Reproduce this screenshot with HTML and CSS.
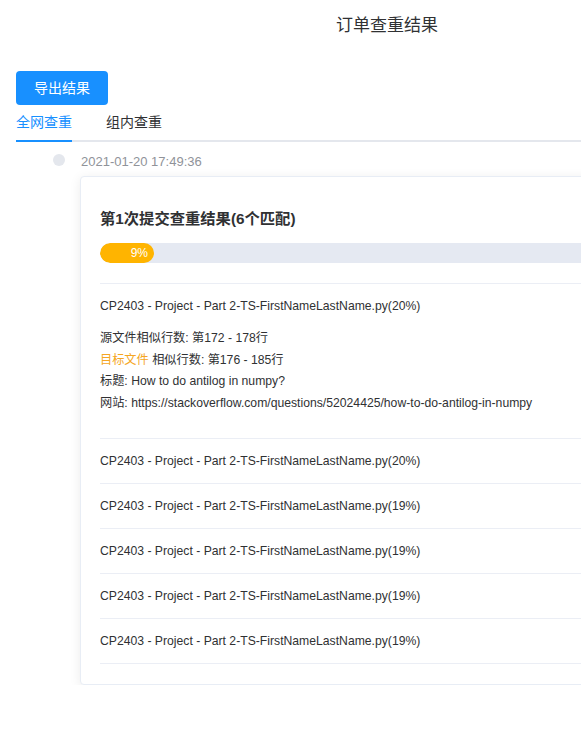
FILE: index.html
```html
<!DOCTYPE html>
<html lang="zh-CN">
<head>
<meta charset="utf-8">
<title>订单查重结果</title>
<link rel="stylesheet" href="styles.css">
</head>
<body>
<div class="page">
  <h1 class="title">订单查重结果</h1>
  <div class="toolbar">
    <button class="btn-primary">导出结果</button>
  </div>
  <div class="tabs">
    <div class="tab active">全网查重</div>
    <div class="tab">组内查重</div>
  </div>
  <ul class="timeline">
    <li class="tl-item">
      <span class="tl-dot"></span>
      <div class="tl-body">
        <div class="tl-time">2021-01-20 17:49:36</div>
        <div class="card">
          <h3 class="card-title">第1次提交查重结果(6个匹配)</h3>
          <div class="progress"><div class="progress-fill" style="width:54px"><span>9%</span></div></div>
          <ul class="matches">
            <li class="match">
              <div class="match-head">CP2403 - Project - Part 2-TS-FirstNameLastName.py(20%)</div>
              <div class="match-detail">
                <div>源文件相似行数: 第172 - 178行</div>
                <div><span class="warn">目标文件</span> 相似行数: 第176 - 185行</div>
                <div>标题: How to do antilog in numpy?</div>
                <div>网站: https://stackoverflow.com/questions/52024425/how-to-do-antilog-in-numpy</div>
              </div>
            </li>
            <li class="match"><div class="match-head">CP2403 - Project - Part 2-TS-FirstNameLastName.py(20%)</div></li>
            <li class="match"><div class="match-head">CP2403 - Project - Part 2-TS-FirstNameLastName.py(19%)</div></li>
            <li class="match"><div class="match-head">CP2403 - Project - Part 2-TS-FirstNameLastName.py(19%)</div></li>
            <li class="match"><div class="match-head">CP2403 - Project - Part 2-TS-FirstNameLastName.py(19%)</div></li>
            <li class="match"><div class="match-head">CP2403 - Project - Part 2-TS-FirstNameLastName.py(19%)</div></li>
          </ul>
        </div>
      </div>
    </li>
  </ul>
</div>
</body>
</html>
```

FILE: styles.css
```css
html, body {
  margin: 0;
  padding: 0;
  overflow: hidden;
  background: #ffffff;
}
body {
  font-family: "Liberation Sans", "Noto Sans CJK SC", sans-serif;
  color: #303133;
}
.page {
  width: 774px;
  padding: 0 16px;
  box-sizing: border-box;
}
.title {
  margin: 0;
  padding-top: 14px;
  font-size: 17px;
  font-weight: normal;
  line-height: 24px;
  text-align: center;
  color: #303133;
}
.toolbar {
  margin-top: 33px;
}
.btn-primary {
  display: block;
  width: 92px;
  height: 34px;
  padding: 0;
  border: none;
  border-radius: 4px;
  background: #1890ff;
  color: #ffffff;
  font-family: inherit;
  font-size: 14px;
  line-height: 34px;
}
.tabs {
  display: flex;
  gap: 34px;
  border-bottom: 2px solid #e4e7ed;
}
.tab {
  height: 35px;
  line-height: 35px;
  font-size: 14px;
  color: #303133;
  margin-bottom: -2px;
  border-bottom: 2px solid transparent;
}
.tab.active {
  color: #1890ff;
  border-bottom-color: #1890ff;
}
.timeline {
  list-style: none;
  margin: 13px 0 0;
  padding: 0 0 0 37px;
}
.tl-item {
  display: flex;
  align-items: flex-start;
  gap: 16px;
}
.tl-dot {
  flex: none;
  width: 12px;
  height: 12px;
  margin-top: -1px;
  border-radius: 50%;
  background: #e4e7ed;
}
.tl-body {
  flex: none;
  margin-left: -1px;
}
.tl-time {
  font-size: 13px;
  line-height: 13px;
  color: #909399;
  margin-bottom: 8px;
  padding-left: 1px;
}
.card {
  width: 640px;
  border: 1px solid #e8edf5;
  border-radius: 4px;
  box-shadow: 0 2px 12px 0 rgba(0, 0, 0, 0.08);
  padding: 32px 20px 20px 19px;
  background: #ffffff;
}
.card-title {
  margin: 0;
  font-size: 15.3px;
  line-height: 20px;
  font-weight: bold;
  color: #303133;
}
.progress {
  margin-top: 14px;
  height: 20px;
  border-radius: 10px;
  background: #e5e9f2;
  overflow: hidden;
}
.progress-fill {
  height: 20px;
  border-radius: 10px;
  background: #ffb400;
  text-align: right;
}
.progress-fill span {
  display: inline-block;
  margin-right: 6px;
  font-size: 12px;
  line-height: 20px;
  color: #ffffff;
}
.matches {
  list-style: none;
  margin: 20px 0 0;
  padding: 0;
  border-top: 1px solid #ebeef5;
}
.match {
  border-bottom: 1px solid #ebeef5;
}
.match-head {
  height: 44px;
  line-height: 44px;
  font-size: 12.2px;
  color: #303133;
}
.match-detail {
  padding-bottom: 23px;
  font-size: 12.2px;
  line-height: 21.7px;
  color: #303133;
}
.warn {
  color: #f5a623;
}
```
